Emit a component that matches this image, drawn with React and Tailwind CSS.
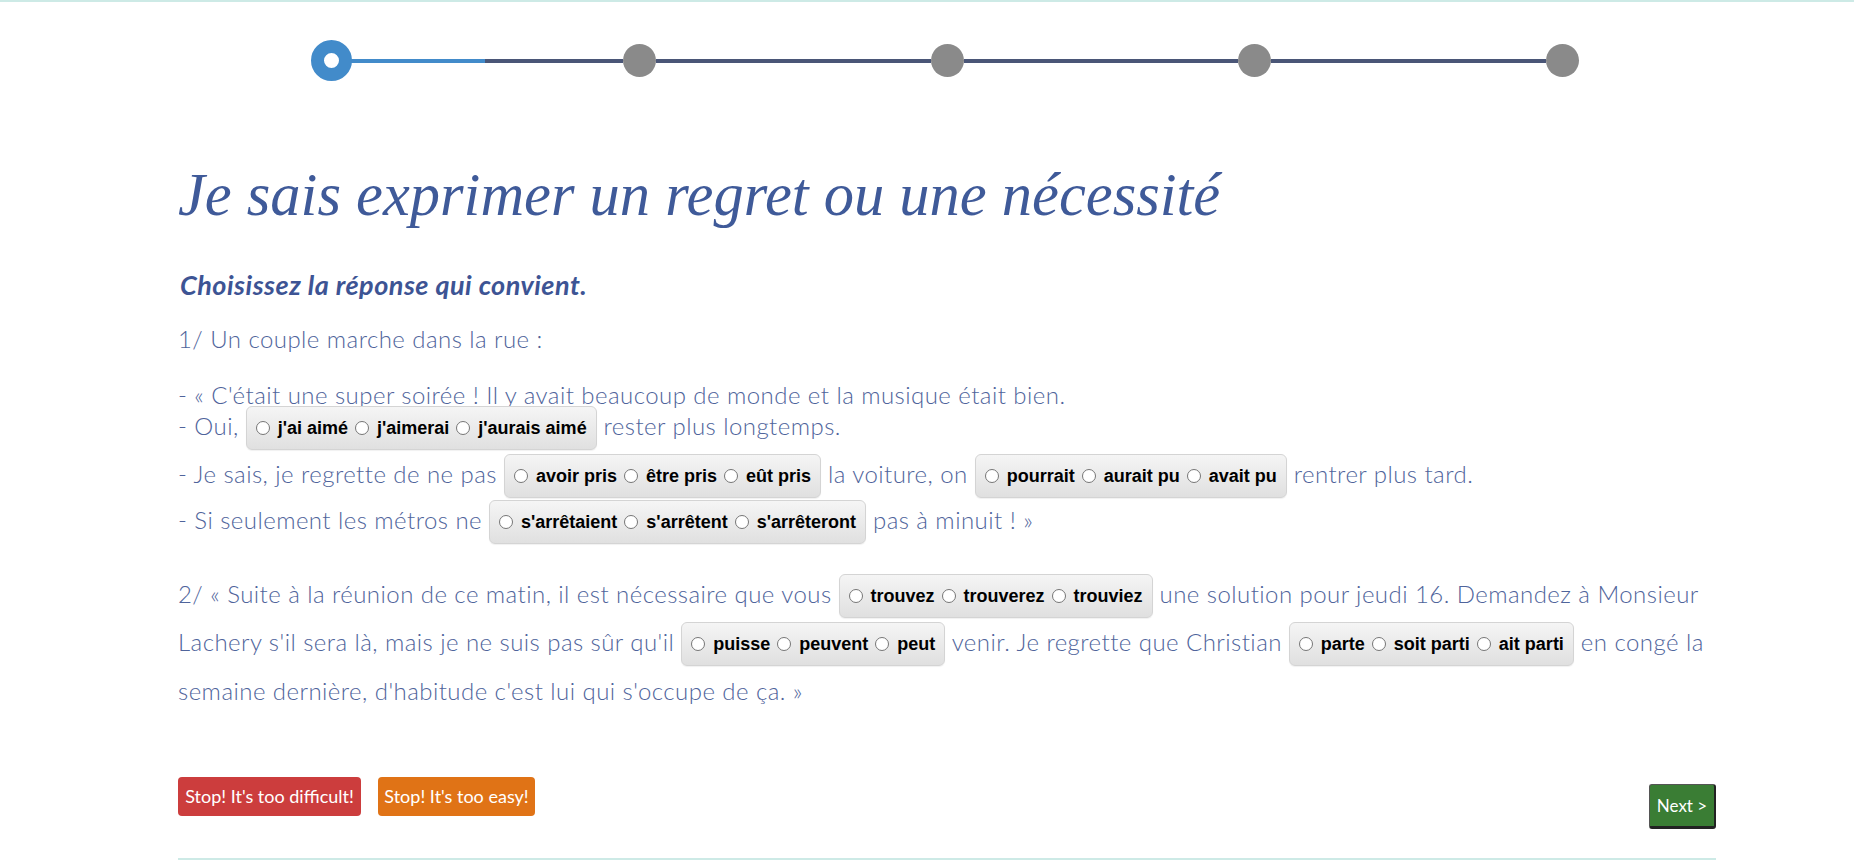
import React from "react";

const body = "font-['Lato',sans-serif] font-light text-[24px] tracking-[0.45px] text-[#4f649b]";

function Choice({ options, name }) {
  return (
    <span className="inline-flex items-center h-[44px] px-[9px] gap-[7px] rounded-md border border-[#d4d4d4] bg-gradient-to-b from-[#f5f5f5] to-[#e0e0e0] shadow-[0_1px_1px_rgba(0,0,0,0.06)] font-['Liberation_Sans',Arial,sans-serif] font-bold text-[18px] tracking-normal text-black">
      {options.map((o) => (
        <label key={o} className="inline-flex items-center gap-[8px] whitespace-nowrap">
          <input
            type="radio"
            name={name}
            className="appearance-none m-0 w-[14px] h-[14px] rounded-full border border-[#767676] bg-white"
          />
          <span>{o}</span>
        </label>
      ))}
    </span>
  );
}

function Row({ children, className = "" }) {
  return (
    <div className={`flex items-baseline h-[44px] whitespace-pre ${className}`}>
      {children}
    </div>
  );
}

function Dot() {
  return <div className="w-[33px] h-[33px] rounded-full bg-[#8a8a8a] shrink-0" />;
}

function Steps() {
  return (
    <div className="flex items-center mx-[137px] h-[41px]">
      <div className="relative z-10 -mx-[4px] w-[41px] h-[41px] rounded-full border-[13px] border-[#428bca] bg-white shrink-0" />
      <div className="flex-1 flex h-[4px]">
        <div className="flex-1 bg-[#428bca]" />
        <div className="flex-1 bg-[#4a5677]" />
      </div>
      <Dot />
      <div className="flex-1 h-[4px] bg-[#4a5677]" />
      <Dot />
      <div className="flex-1 h-[4px] bg-[#4a5677]" />
      <Dot />
      <div className="flex-1 h-[4px] bg-[#4a5677]" />
      <Dot />
    </div>
  );
}

export default function App() {
  return (
    <div className="min-h-screen bg-white border-t-2 border-[#cdeae6]">
      <div className="ml-[178px] w-[1538px] pt-[38px]">
        <Steps />

        <h1 className="mt-[84px] h-[60px] leading-none font-['Liberation_Serif',serif] italic font-normal text-[60.5px] text-[#3f5a99] whitespace-nowrap">
          Je sais exprimer un regret ou une nécessité
        </h1>

        <p className="mt-[45px] pl-[2px] leading-[29px] font-['Lato',sans-serif] font-bold italic text-[27px] tracking-[0.5px] text-[#3d5494]">
          Choisissez la réponse qui convient.
        </p>

        <div className={body}>
          <p className="mt-[25px] leading-[29px]">1/ Un couple marche dans la rue :</p>

          <p className="mt-[27px] leading-[29px] whitespace-nowrap">
            - « C'était une super soirée ! Il y avait beaucoup de monde et la musique était bien.
          </p>
          <Row className="-mt-[3px]">
            {"- Oui, "}
            <Choice name="q1" options={["j'ai aimé", "j'aimerai", "j'aurais aimé"]} />
            {" rester plus longtemps."}
          </Row>
          <Row className="mt-[4px]">
            {"- Je sais, je regrette de ne pas "}
            <Choice name="q2" options={["avoir pris", "être pris", "eût pris"]} />
            {" la voiture, on "}
            <Choice name="q3" options={["pourrait", "aurait pu", "avait pu"]} />
            {" rentrer plus tard."}
          </Row>
          <Row className="mt-[2px]">
            {"- Si seulement les métros ne "}
            <Choice name="q4" options={["s'arrêtaient", "s'arrêtent", "s'arrêteront"]} />
            {" pas à minuit ! »"}
          </Row>

          <Row className="mt-[30px]">
            {"2/ « Suite à la réunion de ce matin, il est nécessaire que vous "}
            <Choice name="q5" options={["trouvez", "trouverez", "trouviez"]} />
            {" une solution pour jeudi 16. Demandez à Monsieur"}
          </Row>
          <Row className="mt-[4px]">
            {"Lachery s'il sera là, mais je ne suis pas sûr qu'il "}
            <Choice name="q6" options={["puisse", "peuvent", "peut"]} />
            {" venir. Je regrette que Christian "}
            <Choice name="q7" options={["parte", "soit parti", "ait parti"]} />
            {" en congé la"}
          </Row>
          <div className="mt-[3px] flex items-center h-[44px] whitespace-pre">
            {"semaine dernière, d'habitude c'est lui qui s'occupe de ça. »"}
          </div>
        </div>

        <div className="mt-[64px] flex items-start justify-between">
          <div className="flex gap-[17px] font-['Lato',sans-serif] text-[18px] text-white">
            <button className="w-[183px] h-[39px] rounded-[4px] bg-[#cc3d3d] whitespace-nowrap">
              Stop! It's too difficult!
            </button>
            <button className="w-[157px] h-[39px] rounded-[4px] bg-[#e07316] whitespace-nowrap">
              Stop! It's too easy!
            </button>
          </div>
          <button className="mt-[7px] w-[67px] h-[45px] rounded-[3px] bg-[#3a7d34] border border-[#555] border-b-[3px] border-r-[2px] border-b-[#222] border-r-[#222] font-['Lato',sans-serif] text-[17px] text-white">
            Next &gt;
          </button>
        </div>

        <hr className="mt-[29px] border-0 border-t-2 border-[#cdeae6]" />
      </div>
    </div>
  );
}
